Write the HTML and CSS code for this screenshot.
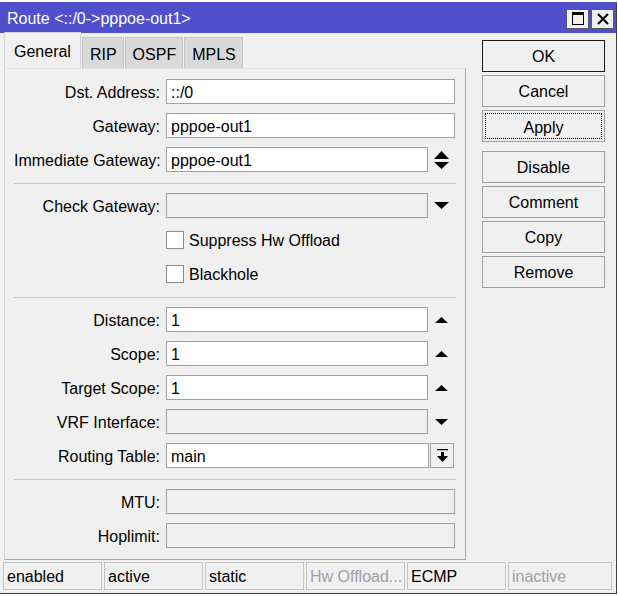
FILE: index.html
```html
<!DOCTYPE html>
<html lang="en">
<head>
    <meta charset="UTF-8">
    <title>Route</title>
    <link rel="stylesheet" href="styles.css">
</head>
<body>
    <div class="window">
        <div class="titlebar">
            <span class="title">Route &lt;::/0-&gt;pppoe-out1&gt;</span>
            <div class="title-btns">
                <span class="tbtn"><span class="max-icon"></span></span>
                <span class="tbtn">
                    <svg width="12" height="12" viewBox="0 0 12 12"><path d="M1 1 L11 11 M11 1 L1 11" stroke="#000" stroke-width="2"/></svg>
                </span>
            </div>
        </div>

        <div class="main">
            <div class="left">
                <div class="tabs">
                    <span class="tab active">General</span>
                    <span class="tab">RIP</span>
                    <span class="tab">OSPF</span>
                    <span class="tab">MPLS</span>
                </div>
                <div class="panel">
                    <div class="row">
                        <span class="label">Dst. Address:</span>
                        <span class="field wide">::/0</span>
                    </div>
                    <div class="row">
                        <span class="label">Gateway:</span>
                        <span class="field wide">pppoe-out1</span>
                    </div>
                    <div class="row">
                        <span class="label">Immediate Gateway:</span>
                        <span class="field">pppoe-out1</span>
                        <span class="arrow">
                            <svg width="15" height="18" viewBox="0 0 15 18"><path d="M7.5 0 L15 8 L0 8 Z M0 11 L15 11 L7.5 18 Z" fill="#000"/></svg>
                        </span>
                    </div>
                    <div class="sep"></div>
                    <div class="row">
                        <span class="label">Check Gateway:</span>
                        <span class="field off"></span>
                        <span class="arrow">
                            <svg width="15" height="7" viewBox="0 0 15 7"><path d="M0 0 L15 0 L7.5 7 Z" fill="#000"/></svg>
                        </span>
                    </div>
                    <div class="row">
                        <span class="label"></span>
                        <span class="check"></span>
                        <span class="check-text">Suppress Hw Offload</span>
                    </div>
                    <div class="row">
                        <span class="label"></span>
                        <span class="check"></span>
                        <span class="check-text">Blackhole</span>
                    </div>
                    <div class="sep"></div>
                    <div class="row">
                        <span class="label">Distance:</span>
                        <span class="field">1</span>
                        <span class="arrow">
                            <svg width="13" height="6" viewBox="0 0 13 6"><path d="M6.5 0 L13 6 L0 6 Z" fill="#000"/></svg>
                        </span>
                    </div>
                    <div class="row">
                        <span class="label">Scope:</span>
                        <span class="field">1</span>
                        <span class="arrow">
                            <svg width="13" height="6" viewBox="0 0 13 6"><path d="M6.5 0 L13 6 L0 6 Z" fill="#000"/></svg>
                        </span>
                    </div>
                    <div class="row">
                        <span class="label">Target Scope:</span>
                        <span class="field">1</span>
                        <span class="arrow">
                            <svg width="13" height="6" viewBox="0 0 13 6"><path d="M6.5 0 L13 6 L0 6 Z" fill="#000"/></svg>
                        </span>
                    </div>
                    <div class="row">
                        <span class="label">VRF Interface:</span>
                        <span class="field off"></span>
                        <span class="arrow">
                            <svg width="13" height="6" viewBox="0 0 13 6"><path d="M0 0 L13 0 L6.5 6 Z" fill="#000"/></svg>
                        </span>
                    </div>
                    <div class="row">
                        <span class="label">Routing Table:</span>
                        <span class="field table">main</span>
                        <span class="drop-btn">
                            <svg width="11" height="13" viewBox="0 0 11 13"><path d="M0 0.5 L11 0.5" stroke="#000" stroke-width="1.5"/><path d="M4 3 L7 3 L7 7 L11 7 L5.5 13 L0 7 L4 7 Z" fill="#000"/></svg>
                        </span>
                    </div>
                    <div class="sep"></div>
                    <div class="row">
                        <span class="label">MTU:</span>
                        <span class="field wide off"></span>
                    </div>
                    <div class="row">
                        <span class="label">Hoplimit:</span>
                        <span class="field wide off"></span>
                    </div>
                </div>
            </div>

            <div class="actions">
                <span class="btn default">OK</span>
                <span class="btn">Cancel</span>
                <span class="btn focus"><span class="focus-ring">Apply</span></span>
                <span class="btn spaced">Disable</span>
                <span class="btn">Comment</span>
                <span class="btn">Copy</span>
                <span class="btn">Remove</span>
            </div>
        </div>

        <div class="statusbar">
            <span class="cell">enabled</span>
            <span class="cell">active</span>
            <span class="cell">static</span>
            <span class="cell dim">Hw Offload...</span>
            <span class="cell">ECMP</span>
            <span class="cell dim last">inactive</span>
        </div>
    </div>
</body>
</html>
```

FILE: styles.css
```css
body {
    margin: 0;
    padding: 0;
    background: #fff;
    font-family: "Liberation Sans", Arial, sans-serif;
    font-size: 16px;
    color: #000;
}
.window {
    width: 616px;
    height: 591px;
    margin-top: 2px;
    background: #f0f0f0;
    border-right: 1px solid #3c3c3c;
    border-bottom: 1px solid #3c3c3c;
    display: flex;
    flex-direction: column;
}
.titlebar {
    height: 31px;
    background: #5050cd;
    color: #fff;
    display: flex;
    align-items: center;
    justify-content: space-between;
    padding: 0 2px 0 7px;
}
.title {
    padding-top: 2px;
}
.title-btns {
    display: flex;
    gap: 2px;
    padding-top: 2px;
}
.tbtn {
    width: 21px;
    height: 18px;
    background: #f0f0f0;
    border: 1px solid #5a5a5a;
    display: flex;
    align-items: center;
    justify-content: center;
}
.max-icon {
    width: 10px;
    height: 9px;
    border: 1px solid #000;
    border-top-width: 3px;
}
.main {
    display: flex;
    padding-left: 4px;
}
.left {
    width: 462px;
}
.tabs {
    display: flex;
    align-items: flex-end;
    height: 35px;
}
.tab {
    height: 30px;
    line-height: 33px;
    padding: 0 6px 0 7px;
    background: #d9d9d9;
    border: 1px solid #c4c4c4;
    border-bottom: none;
    margin-left: 1px;
}
.tab.active {
    height: 35px;
    line-height: 38px;
    padding: 0 9px;
    background: #f0f0f0;
    border-color: #d4d4d4;
    margin-left: 0;
}
.panel {
    height: 471px;
    border: 1px solid #d4d4d4;
    border-top-color: #e4e4e4;
    border-right-color: #a8a8a8;
    border-bottom-color: #a8a8a8;
    padding: 10px 9px 9px 9px;
    display: flex;
    flex-direction: column;
    gap: 9px;
}
.row {
    display: flex;
    align-items: center;
    height: 25px;
}
.label {
    width: 146px;
    margin-right: 6px;
    padding-top: 2px;
    text-align: right;
    white-space: nowrap;
}
.check-text {
    padding-top: 2px;
}
.field {
    box-sizing: border-box;
    width: 262px;
    height: 25px;
    background: #fff;
    border: 1px solid #a0a0a0;
    padding-left: 4px;
    line-height: 25px;
}
.field.wide {
    width: 289px;
}
.field.table {
    width: 263px;
}
.field.off {
    background: #f0f0f0;
}
.arrow {
    width: 27px;
    display: flex;
    justify-content: center;
}
.drop-btn {
    box-sizing: border-box;
    width: 24px;
    height: 25px;
    margin-left: 1px;
    border: 1px solid #a0a0a0;
    display: flex;
    align-items: center;
    justify-content: center;
}
.sep {
    margin-top: 2px;
    border-top: 1px solid #c8c8c8;
}
.check {
    box-sizing: border-box;
    width: 18px;
    height: 18px;
    background: #fff;
    border: 1px solid #8c8c8c;
    margin-right: 5px;
}
.actions {
    display: flex;
    flex-direction: column;
    gap: 3px;
    margin-left: 16px;
    padding-top: 7px;
}
.btn {
    box-sizing: border-box;
    width: 123px;
    height: 32px;
    padding-top: 2px;
    border: 1px solid #a0a0a0;
    display: flex;
    align-items: center;
    justify-content: center;
}
.btn.default {
    border-color: #1a1a1a;
}
.btn.focus {
    padding-top: 0;
}
.btn.spaced {
    margin-top: 6px;
}
.focus-ring {
    width: 117px;
    height: 26px;
    line-height: 28px;
    text-align: center;
    border: 1px dotted #000;
    box-sizing: border-box;
}
.statusbar {
    display: flex;
    gap: 2px;
    padding: 2px 4px 0 3px;
}
.cell {
    box-sizing: border-box;
    width: 99px;
    height: 28px;
    border: 1px solid #c4c4c4;
    padding-left: 3px;
    line-height: 28px;
}
.cell.dim {
    color: #a0a0a0;
}
.cell.last {
    flex: 1;
}
```
